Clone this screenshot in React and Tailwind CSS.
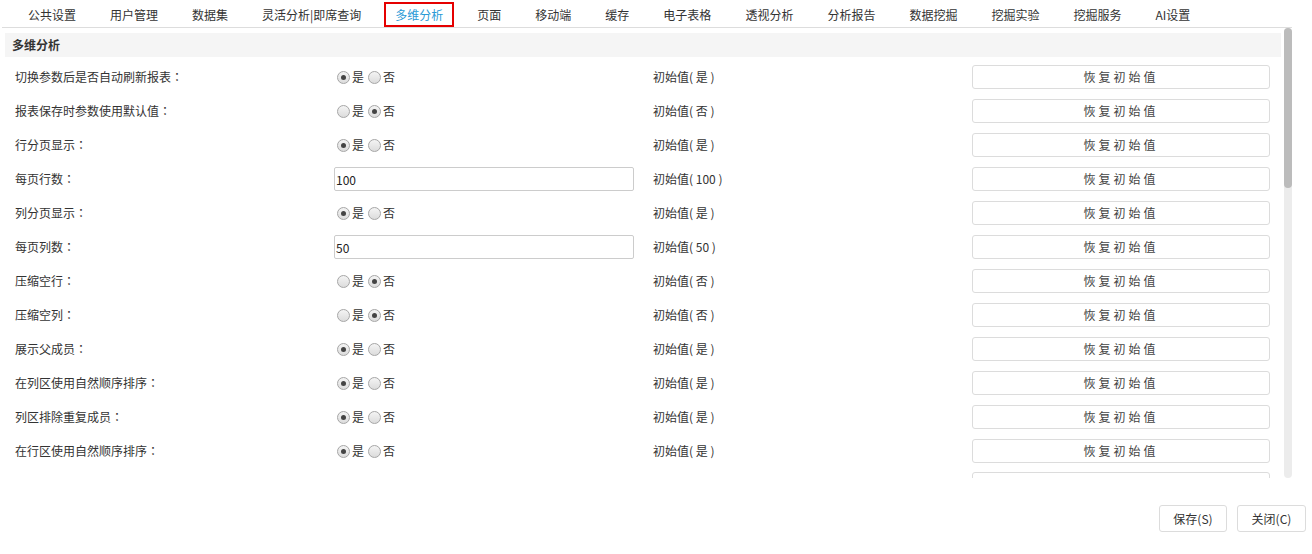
import React from 'react';

const tabs = ['公共设置', '用户管理', '数据集', '灵活分析|即席查询', '多维分析', '页面', '移动端', '缓存', '电子表格', '透视分析', '分析报告', '数据挖掘', '挖掘实验', '挖掘服务', 'AI设置'];

const rows = [
  { label: '切换参数后是否自动刷新报表', type: 'radio', value: true, init: '是' },
  { label: '报表保存时参数使用默认值', type: 'radio', value: false, init: '否' },
  { label: '行分页显示', type: 'radio', value: true, init: '是' },
  { label: '每页行数', type: 'input', value: '100', init: '100' },
  { label: '列分页显示', type: 'radio', value: true, init: '是' },
  { label: '每页列数', type: 'input', value: '50', init: '50' },
  { label: '压缩空行', type: 'radio', value: false, init: '否' },
  { label: '压缩空列', type: 'radio', value: false, init: '否' },
  { label: '展示父成员', type: 'radio', value: true, init: '是' },
  { label: '在列区使用自然顺序排序', type: 'radio', value: true, init: '是' },
  { label: '列区排除重复成员', type: 'radio', value: true, init: '是' },
  { label: '在行区使用自然顺序排序', type: 'radio', value: true, init: '是' },
  { label: '', type: 'none', value: null, init: '' },
];

function Radio({ checked }) {
  return (
    <span className="relative inline-flex h-[13px] w-[13px] items-center justify-center rounded-full border border-[#a6a6a6] bg-gradient-to-b from-[#f4f4f4] to-[#dcdcdc]">
      {checked && <span className="h-[5px] w-[5px] rounded-full bg-[#444]" />}
    </span>
  );
}

function Row({ row }) {
  return (
    <div className="grid h-[34px] grid-cols-[334px_319px_319px_298px] items-center text-[12px] text-[#333]">
      <div className="pl-[15px]">
        {row.label}
        {row.label && <span style={{ fontFamily: '"Noto Sans CJK TC", sans-serif' }}>：</span>}
      </div>
      <div>
        {row.type === 'radio' && (
          <div className="flex items-center pl-[3px]">
            <Radio checked={row.value} />
            <span className="ml-[2px] mr-[4px]">是</span>
            <Radio checked={!row.value} />
            <span className="ml-[2px]">否</span>
          </div>
        )}
        {row.type === 'input' && (
          <input
            readOnly
            value={row.value}
            className="h-[24px] w-[300px] rounded-[2px] border border-[#cccccc] px-[1px] text-[12px] text-[#222] outline-none"
          />
        )}
      </div>
      <div>{row.init && <span>初始值( {row.init} )</span>}</div>
      <div>
        <button className="h-[24px] w-[298px] rounded-[3px] border border-[#dcdcdc] bg-white text-[12px] tracking-[3px] text-[#444]">
          {row.type !== 'none' && '恢复初始值'}
        </button>
      </div>
    </div>
  );
}

export default function App() {
  return (
    <div className="h-[554px] w-[1312px] overflow-hidden bg-white text-[#333]" style={{ fontFamily: '"Noto Sans CJK SC", "Liberation Sans", sans-serif' }}>
      {/* Tabs */}
      <div className="ml-[2px] mr-[20px] flex h-[28px] items-end gap-[12px] border-b border-[#dddddd] pl-[15px]">
        {tabs.map(t => (
          <div
            key={t}
            className={`flex h-[25px] items-center border-2 px-[9px] text-[12px] ${t === '多维分析' ? 'border-[#e50000] text-[#2a9ad6]' : 'border-transparent text-[#333]'}`}
          >
            {t}
          </div>
        ))}
      </div>

      {/* Content */}
      <div className="flex h-[450px]">
        <div className="w-[1284px] overflow-hidden pt-[5px]">
          <div className="ml-[5px] flex h-[24px] w-[1276px] items-center bg-[#f5f5f5] pl-[7px] text-[12px] font-bold text-[#333]">
            多维分析
          </div>
          <div className="mt-[3px]">
            {rows.map((r, i) => (
              <Row key={i} row={r} />
            ))}
          </div>
        </div>
        <div className="w-[8px] rounded-[4px] bg-[#ececec]">
          <div className="h-[160px] rounded-[4px] bg-[#bcbcbc]" />
        </div>
      </div>

      {/* Footer */}
      <div className="flex justify-end gap-[10px] pr-[6px] pt-[27px]">
        <button className="h-[27px] w-[68px] rounded-[3px] border border-[#dcdcdc] bg-white text-[12px] text-[#333]">保存(S)</button>
        <button className="h-[27px] w-[69px] rounded-[3px] border border-[#dcdcdc] bg-white text-[12px] text-[#333]">关闭(C)</button>
      </div>
    </div>
  );
}
